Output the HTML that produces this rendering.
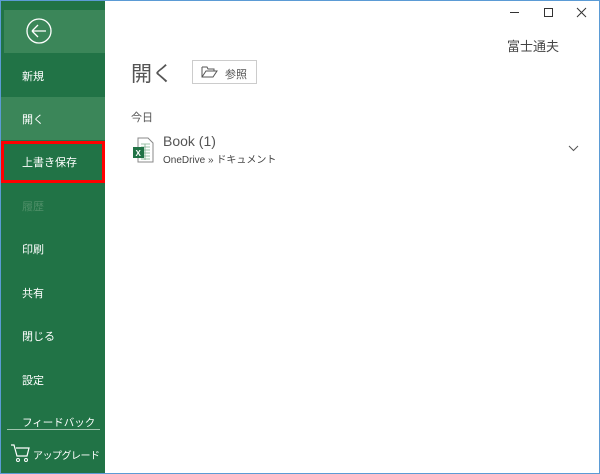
<!DOCTYPE html>
<html><head><meta charset="utf-8"><style>
*{margin:0;padding:0;box-sizing:border-box}
body{width:600px;height:474px;overflow:hidden;background:#fff;font-family:"Liberation Sans","Noto Sans CJK JP",sans-serif;position:relative}
.frame{position:absolute;inset:0;border:1px solid #5b9bd5}
.side{position:absolute;left:1px;top:1px;width:104px;height:472px;background:#217346}
.back{position:absolute;left:3px;top:9px;width:101px;height:43px;background:#3b8659}
.open{position:absolute;left:0;top:96px;width:104px;height:43px;background:#3b8659}
.it{position:absolute;left:21px;color:#fff;font-size:11px;white-space:nowrap}
.red{position:absolute;left:1px;top:141px;width:104px;height:42px;border:3px solid #ff0000}
.t{position:absolute;color:#444;white-space:nowrap}
</style></head><body>
<div class="side">
<div class="back"><svg width="101" height="43"><circle cx="35" cy="21" r="12" fill="none" stroke="#fff" stroke-width="1.3"/><path d="M28 21h14M28 21l6-6M28 21l6 6" stroke="#fff" stroke-width="1.3" fill="none"/></svg></div>
<div class="open"></div>
<div class="it" style="top:67px">新規</div>
<div class="it" style="top:110px">開く</div>
<div class="it" style="top:153px">上書き保存</div>
<div class="it" style="top:197px;color:#4f8f68">履歴</div>
<div class="it" style="top:240px">印刷</div>
<div class="it" style="top:284px">共有</div>
<div class="it" style="top:327px">閉じる</div>
<div class="it" style="top:371px">設定</div>
<div class="it" style="top:414px;font-size:10.5px">フィードバック</div>
<div style="position:absolute;left:6px;top:428px;width:93px;height:1px;background:#9fc4ae"></div>
<svg style="position:absolute;left:9px;top:442px" width="22" height="20"><path d="M1 2h3l3 11h10l2-8H6" fill="none" stroke="#fff" stroke-width="1.2"/><circle cx="8" cy="17" r="1.5" fill="none" stroke="#fff"/><circle cx="16" cy="17" r="1.5" fill="none" stroke="#fff"/></svg>
<div class="it" style="top:446px;left:32px;font-size:10px;letter-spacing:-0.5px">アップグレード</div>
</div>
<div class="red"></div>
<div class="frame"></div>
<div class="t" style="left:131px;top:58px;font-size:21px;color:#555">開く</div>
<div style="position:absolute;left:192px;top:60px;width:65px;height:24px;border:1px solid #ccc"></div>
<svg style="position:absolute;left:201px;top:65px" width="18" height="14"><path d="M1 2h5l1 2h6v2M1 2v10h11l4-6H5l-4 6" fill="none" stroke="#555" stroke-width="1"/></svg>
<div class="t" style="left:225px;top:66px;font-size:11px;color:#555">参照</div>
<div class="t" style="left:131px;top:109px;font-size:11px;color:#555">今日</div>
<svg style="position:absolute;left:132px;top:137px" width="22" height="26"><path d="M6 1h10l5 5v19H6z" fill="#fff" stroke="#888"/><path d="M9 7h9M9 10h9M9 13h9M9 16h9M9 19h9M9 22h9M13 7v16" stroke="#7fb08f" stroke-width=".8"/><rect x="1" y="10" width="11" height="11" fill="#217346"/><text x="3.5" y="19" fill="#fff" font-size="8" font-weight="bold" font-family="Liberation Sans">X</text></svg>
<div class="t" style="left:163px;top:133px;font-size:14px;color:#555">Book (1)</div>
<div class="t" style="left:163px;top:151px;font-size:10px;color:#444">OneDrive » ドキュメント</div>
<svg style="position:absolute;left:568px;top:145px" width="12" height="8"><path d="M1 1l4.5 4.5L10 1" fill="none" stroke="#555"/></svg>
<div class="t" style="left:507px;top:36px;font-size:13px;color:#444">富士通夫</div>
<div style="position:absolute;left:510px;top:12px;width:9px;height:1px;background:#333"></div>
<div style="position:absolute;left:544px;top:8px;width:9px;height:9px;border:1px solid #333"></div>
<svg style="position:absolute;left:576px;top:7px" width="11" height="11"><path d="M1 1l9 9M10 1l-9 9" stroke="#333"/></svg>
</body></html>
